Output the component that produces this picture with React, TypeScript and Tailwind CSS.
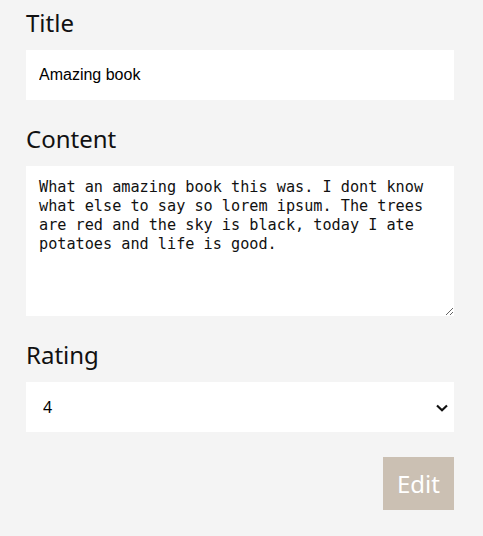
import { useState } from 'react';

export default function App() {
  const [title, setTitle] = useState('Amazing book');
  const [content, setContent] = useState(
    'What an amazing book this was. I dont know what else to say so lorem ipsum. The trees are red and the sky is black, today I ate potatoes and life is good.'
  );
  const [rating, setRating] = useState('4');

  const labelClass =
    "block h-[30px] leading-[30px] text-[24px] text-[#111] mb-[12px] font-['Noto_Sans',sans-serif]";

  return (
    <div className="min-h-[536px] w-full bg-[#f4f4f4] pl-[26px] pr-[29px] pt-[8px] pb-[26px]">
      <form onSubmit={(e) => e.preventDefault()} className="flex flex-col">
        <div>
          <label className={labelClass}>Title</label>
          <input
            value={title}
            onChange={(e) => setTitle(e.target.value)}
            className="block w-full h-[50px] bg-white px-[13px] text-[16px] text-black outline-none font-['Liberation_Sans',Arial,sans-serif]"
          />
        </div>

        <div className="mt-6">
          <label className={labelClass}>Content</label>
          <textarea
            value={content}
            onChange={(e) => setContent(e.target.value)}
            className="block w-full h-[150px] bg-white px-[13px] pt-[12px] text-[15.2px] leading-[19px] text-[#111] outline-none font-['DejaVu_Sans_Mono',monospace]"
          />
        </div>

        <div className="mt-6">
          <label className={labelClass}>Rating</label>
          <div className="relative">
            <select
              value={rating}
              onChange={(e) => setRating(e.target.value)}
              className="block w-full h-[50px] appearance-none bg-white pl-[17px] text-[16px] text-black outline-none font-['Noto_Sans',sans-serif]"
            >
              <option value="1">1</option>
              <option value="2">2</option>
              <option value="3">3</option>
              <option value="4">4</option>
              <option value="5">5</option>
            </select>
            <svg
              className="absolute right-[6px] top-[22px] pointer-events-none"
              width="12"
              height="8"
              viewBox="0 0 12 8"
              fill="none"
            >
              <path d="M1 1.5 L6 6.2 L11 1.5" stroke="#111" strokeWidth="2.2" />
            </svg>
          </div>
        </div>

        <div className="mt-[25px] flex justify-end">
          <button
            type="submit"
            className="h-[53px] w-[71px] bg-[#cbc0b3] text-[24px] text-white font-['Noto_Sans',sans-serif]"
          >
            Edit
          </button>
        </div>
      </form>
    </div>
  );
}
